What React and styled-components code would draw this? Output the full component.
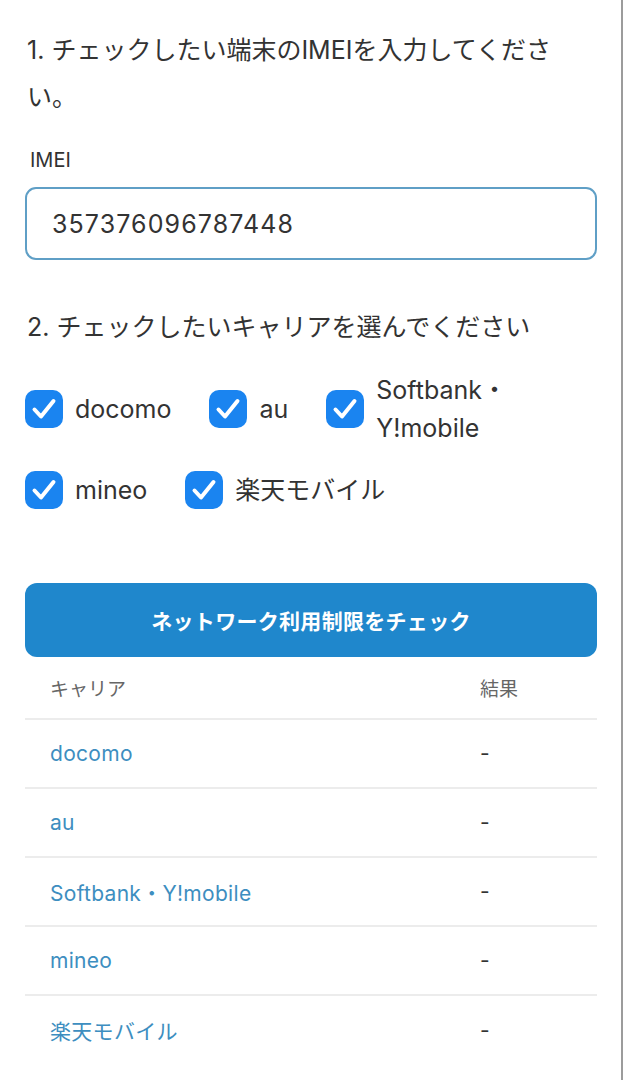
import React, { useState } from 'react';
import styled, { createGlobalStyle } from 'styled-components';

const GlobalStyle = createGlobalStyle`
  html, body {
    margin: 0;
    padding: 0;
    background: #ffffff;
  }
  body {
    font-family: "Inter", "Liberation Sans", "Noto Sans CJK JP", sans-serif;
    color: #333333;
  }
  * { box-sizing: border-box; }
`;

const Page = styled.div`
  min-height: 100vh;
  border-right: 2px solid #9c9c9c;
  padding: 27px 24px 0 25px;
`;

const Heading = styled.h2`
  margin: 0;
  padding-left: 2px;
  padding-right: 30px;
  font-size: 25px;
  font-weight: 400;
  line-height: 47px;
  color: #333333;
`;

const FieldLabel = styled.label`
  display: block;
  margin: 25px 0 13px 5px;
  font-size: 20px;
  line-height: 28px;
  color: #333333;
`;

const ImeiInput = styled.input`
  display: block;
  width: 100%;
  height: 73px;
  padding: 0 25px;
  border: 2px solid #5f9fc6;
  border-radius: 11px;
  font-family: inherit;
  font-size: 25px;
  letter-spacing: 1.1px;
  color: #333333;
  outline: none;
  background: #ffffff;
`;

const Section = styled.div`
  margin-top: ${p => p.$gap || 0}px;
`;

const CarrierGrid = styled.div`
  display: flex;
  flex-wrap: wrap;
  column-gap: 38px;
  row-gap: 24px;
  margin-top: 20px;
`;

const CheckItem = styled.label`
  display: flex;
  align-items: center;
  gap: 12px;
  cursor: pointer;
`;

const Box = styled.span`
  flex: 0 0 38px;
  width: 38px;
  height: 38px;
  border-radius: 10px;
  background: ${p => (p.$checked ? '#1a84f0' : '#ffffff')};
  border: ${p => (p.$checked ? 'none' : '2px solid #bbb')};
  display: flex;
  align-items: center;
  justify-content: center;
`;

const CheckText = styled.span`
  max-width: 210px;
  font-size: 25px;
  line-height: 38px;
  color: #333333;
`;

const CheckButton = styled.button`
  display: block;
  width: 100%;
  height: 74px;
  margin-top: 74px;
  border: none;
  border-radius: 12px;
  background: #1f87cc;
  color: #ffffff;
  font-family: "Noto Sans CJK JP", sans-serif;
  font-size: 21px;
  font-weight: 700;
  letter-spacing: 0.3px;
  cursor: pointer;
`;

const Table = styled.table`
  width: 100%;
  border-collapse: collapse;
`;

const HeadCell = styled.th`
  height: 62px;
  padding: 0 25px;
  text-align: left;
  font-size: 19px;
  font-weight: 400;
  color: #666666;
  border-bottom: 2px solid #ececec;
  width: ${p => p.$width || 'auto'};
`;

const Row = styled.tr`
  & + & td { border-top: 2px solid #ececec; }
`;

const Cell = styled.td`
  height: 69px;
  padding: 0 25px;
  font-size: 21px;
  letter-spacing: ${p => (p.$link ? '0.3px' : '0')};
  color: ${p => (p.$link ? '#3d8ec0' : '#333333')};
`;

function CheckMark() {
  return (
    <svg width="38" height="38" viewBox="0 0 38 38" fill="none">
      <path d="M9.5 19.5 L16 26.5 L28.5 11" stroke="#ffffff" strokeWidth="4" strokeLinecap="round" strokeLinejoin="round" />
    </svg>
  );
}

const carriers = ['docomo', 'au', 'Softbank・Y!mobile', 'mineo', '楽天モバイル'];

export default function App() {
  const [imei, setImei] = useState('357376096787448');
  const [checked, setChecked] = useState(carriers.map(() => true));

  const toggle = i => setChecked(c => c.map((v, j) => (j === i ? !v : v)));

  return (
    <Page>
      <GlobalStyle />
      <Heading>1. チェックしたい端末のIMEIを入力してください。</Heading>
      <FieldLabel htmlFor="imei">IMEI</FieldLabel>
      <ImeiInput id="imei" value={imei} onChange={e => setImei(e.target.value)} />

      <Section $gap={44}>
        <Heading>2. チェックしたいキャリアを選んでください</Heading>
        <CarrierGrid>
          {carriers.map((name, i) => (
            <CheckItem key={name} onClick={() => toggle(i)}>
              <Box $checked={checked[i]}>{checked[i] && <CheckMark />}</Box>
              <CheckText>{name}</CheckText>
            </CheckItem>
          ))}
        </CarrierGrid>
      </Section>

      <CheckButton type="button">ネットワーク利用制限をチェック</CheckButton>

      <Table>
        <thead>
          <tr>
            <HeadCell>キャリア</HeadCell>
            <HeadCell $width="142px">結果</HeadCell>
          </tr>
        </thead>
        <tbody>
          {carriers.map(name => (
            <Row key={name}>
              <Cell $link>{name}</Cell>
              <Cell>-</Cell>
            </Row>
          ))}
        </tbody>
      </Table>
    </Page>
  );
}
